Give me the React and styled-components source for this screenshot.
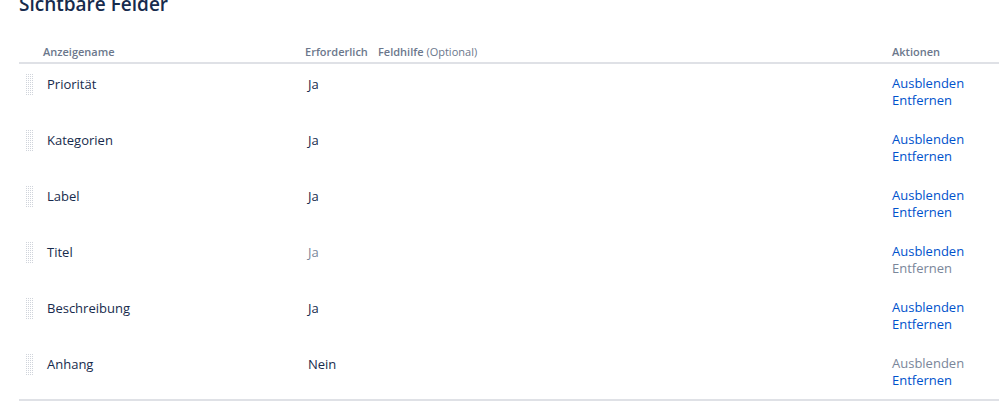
import styled, { createGlobalStyle } from "styled-components";

const GlobalStyle = createGlobalStyle`
  body {
    margin: 0;
    background: #ffffff;
    font-family: "Open Sans", "Lato", sans-serif;
    color: #172b4d;
    overflow: hidden;
  }
`;

const Page = styled.div`
  padding-left: 19px;
  height: 401px;
  overflow: hidden;
`;

const Title = styled.h2`
  margin: -9px 0 0;
  font-size: 19px;
  line-height: 26px;
  font-weight: 600;
  color: #172b4d;
`;

const Table = styled.div`
  margin-top: 23px;
  border-bottom: 2px solid #dfe1e6;
`;

const Grid = styled.div`
  display: grid;
  grid-template-columns: 28px 258px 73px 1fr 107px;
`;

const HeaderRow = styled(Grid)`
  height: 22px;
  align-items: center;
  border-bottom: 2px solid #dfe1e6;
  font-size: 11px;
  font-weight: 600;
  color: #6b778c;
`;

const HeaderCell = styled.div`
  margin-left: ${(p) => p.$shift || 0}px;
  white-space: nowrap;
`;

const Optional = styled.span`
  font-weight: 400;
`;

const Row = styled(Grid)`
  height: 56px;
  box-sizing: border-box;
  padding-top: 11px;
  font-size: 13px;
  line-height: 18px;
  &:last-child {
    height: 55px;
  }
`;

const HandleCell = styled.div`
  padding-left: 7px;
  cursor: grab;
  svg {
    display: block;
    margin-top: -1px;
  }
`;

const Name = styled.div`
  color: #172b4d;
`;

const Required = styled.div`
  padding-left: 3px;
  color: ${(p) => (p.$disabled ? "#7a869a" : "#172b4d")};
`;

const Actions = styled.div`
  display: flex;
  flex-direction: column;
  line-height: 17px;
`;

const Action = styled.a`
  color: ${(p) => (p.$disabled ? "#7a869a" : "#0052cc")};
  text-decoration: none;
  cursor: ${(p) => (p.$disabled ? "default" : "pointer")};
`;

function DragHandle() {
  const dots = [];
  for (let y = 0; y < 11; y++) {
    for (let x = 0; x < 4; x++) {
      dots.push(<rect key={`${x}-${y}`} x={x * 2} y={y * 2} width="1" height="1" />);
    }
  }
  return (
    <svg width="8" height="22" viewBox="0 0 8 22" fill="#d0d4db">
      {dots}
    </svg>
  );
}

const fields = [
  { name: "Priorität", required: "Ja" },
  { name: "Kategorien", required: "Ja" },
  { name: "Label", required: "Ja" },
  { name: "Titel", required: "Ja", lockedRequired: true, noRemove: true },
  { name: "Beschreibung", required: "Ja" },
  { name: "Anhang", required: "Nein", noHide: true },
];

export default function App() {
  return (
    <Page>
      <GlobalStyle />
      <Title>Sichtbare Felder</Title>
      <Table>
        <HeaderRow>
          <div />
          <HeaderCell $shift={-4}>Anzeigename</HeaderCell>
          <HeaderCell>Erforderlich</HeaderCell>
          <HeaderCell>
            Feldhilfe <Optional>(Optional)</Optional>
          </HeaderCell>
          <HeaderCell>Aktionen</HeaderCell>
        </HeaderRow>
        {fields.map((f) => (
          <Row key={f.name}>
            <HandleCell>
              <DragHandle />
            </HandleCell>
            <Name>{f.name}</Name>
            <Required $disabled={f.lockedRequired}>{f.required}</Required>
            <div />
            <Actions>
              <Action $disabled={f.noHide}>Ausblenden</Action>
              <Action $disabled={f.noRemove}>Entfernen</Action>
            </Actions>
          </Row>
        ))}
      </Table>
    </Page>
  );
}
